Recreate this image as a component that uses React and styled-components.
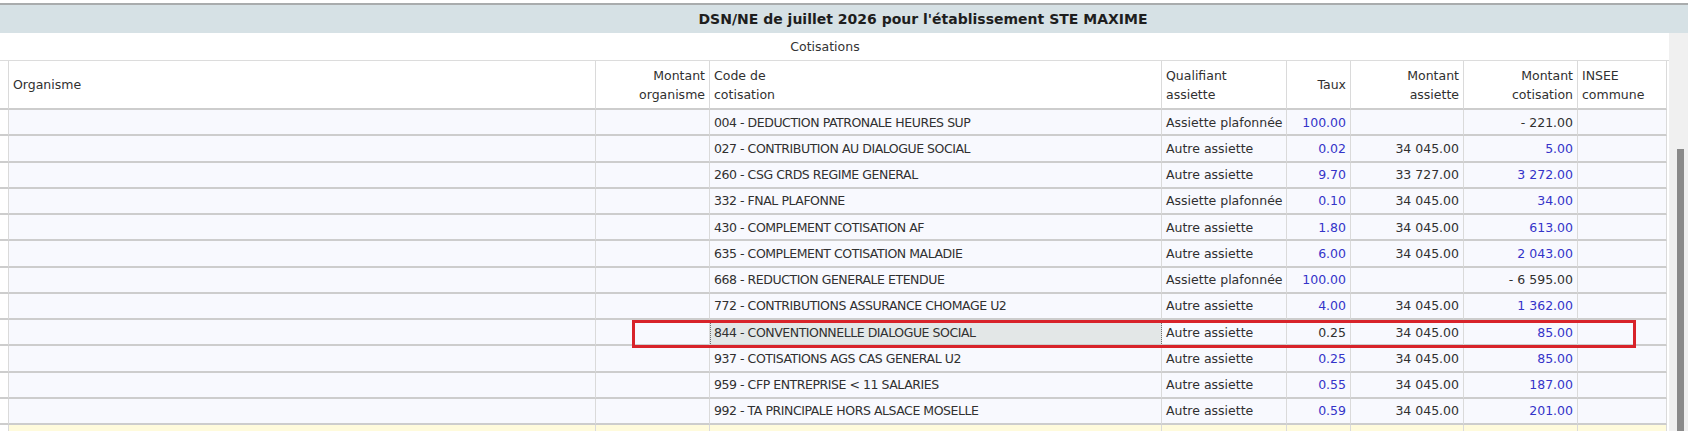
import React from "react";
import styled, { createGlobalStyle, css } from "styled-components";

const COLS = "9px 587px 114px 452px 125px 64px 113px 114px 89px";

const GlobalStyle = createGlobalStyle`
  html, body {
    margin: 0;
    padding: 0;
    background: #ffffff;
  }
  body {
    font-family: "DejaVu Sans", Verdana, sans-serif;
    font-size: 12.5px;
    color: #333333;
  }
`;

const Page = styled.div`
  width: 1688px;
  height: 431px;
  overflow: hidden;
  display: flex;
  flex-direction: column;
  padding-top: 3px;
  box-sizing: border-box;
`;

const TopRule = styled.div`
  height: 2px;
  background: #a9acad;
`;

const TitleBar = styled.div`
  height: 28px;
  background: #d6e1e5;
  display: flex;
  align-items: center;
  justify-content: center;
  padding-left: 158px;
  font-size: 14px;
  font-weight: bold;
  color: #1e1e1e;
`;

const Body = styled.div`
  flex: 1;
  min-height: 0;
  display: flex;
`;

const TableArea = styled.div`
  width: 1669px;
  background: #ffffff;
  overflow: hidden;
`;

const Caption = styled.div`
  height: 28px;
  box-sizing: border-box;
  border-bottom: 1px solid #dcdcdc;
  display: flex;
  align-items: center;
  justify-content: center;
  padding-right: 19px;
  color: #333333;
`;

const Row = styled.div`
  position: relative;
  display: grid;
  grid-template-columns: ${COLS};
  height: ${({ $h }) => $h};
`;

const tones = {
  edge: css`
    background: #ffffff;
  `,
  head: css`
    background: #ffffff;
  `,
  data: css`
    background: #f8f9fe;
  `,
  focus: css`
    background: #e3e7e7;
    outline: 1px dotted #6f6f6f;
    outline-offset: -1px;
  `,
  pending: css`
    background: #fffbdc;
  `,
};

const Cell = styled.div`
  box-sizing: border-box;
  display: flex;
  align-items: center;
  justify-content: ${({ $align }) => ($align === "right" ? "flex-end" : "flex-start")};
  padding: 0 ${({ $align }) => ($align === "right" ? "4px" : "0")} 0
    ${({ $align }) => ($align === "right" ? "0" : "4px")};
  border-right: 1px solid #dadada;
  border-bottom: 2px solid #cdcdcd;
  white-space: pre-line;
  line-height: 19px;
  text-align: ${({ $align }) => ($align === "right" ? "right" : "left")};
  color: ${({ $blue }) => ($blue ? "#3434c9" : "#303030")};
  letter-spacing: ${({ $tight }) => ($tight ? "-0.45px" : "normal")};
  overflow: hidden;
  ${({ $tone }) => tones[$tone || "data"]}
`;

const Marker = styled.div`
  position: absolute;
  left: 632px;
  top: 0;
  width: 1004px;
  height: 28px;
  box-sizing: border-box;
  border: 3.5px solid #d8232a;
  pointer-events: none;
  z-index: 2;
`;

const Gutter = styled.div`
  flex: 1;
  background: #f0f0f0;
  padding-top: 116px;
  padding-left: 8px;
`;

const Thumb = styled.div`
  width: 7px;
  height: 100%;
  background: #8a8a8a;
`;

const headers = [
  { text: "", align: "left" },
  { text: "Organisme", align: "left" },
  { text: "Montant\norganisme", align: "right" },
  { text: "Code de\ncotisation", align: "left" },
  { text: "Qualifiant\nassiette", align: "left" },
  { text: "Taux", align: "right" },
  { text: "Montant\nassiette", align: "right" },
  { text: "Montant\ncotisation", align: "right" },
  { text: "INSEE\ncommune", align: "left" },
];

const rows = [
  { code: "004 - DEDUCTION PATRONALE HEURES SUP", qual: "Assiette plafonnée", taux: "100.00", base: "", amount: "- 221.00", amountBlue: false },
  { code: "027 - CONTRIBUTION AU DIALOGUE SOCIAL", qual: "Autre assiette", taux: "0.02", base: "34 045.00", amount: "5.00" },
  { code: "260 - CSG CRDS REGIME GENERAL", qual: "Autre assiette", taux: "9.70", base: "33 727.00", amount: "3 272.00" },
  { code: "332 - FNAL PLAFONNE", qual: "Assiette plafonnée", taux: "0.10", base: "34 045.00", amount: "34.00" },
  { code: "430 - COMPLEMENT COTISATION AF", qual: "Autre assiette", taux: "1.80", base: "34 045.00", amount: "613.00" },
  { code: "635 - COMPLEMENT COTISATION MALADIE", qual: "Autre assiette", taux: "6.00", base: "34 045.00", amount: "2 043.00" },
  { code: "668 - REDUCTION GENERALE ETENDUE", qual: "Assiette plafonnée", taux: "100.00", base: "", amount: "- 6 595.00", amountBlue: false },
  { code: "772 - CONTRIBUTIONS ASSURANCE CHOMAGE U2", qual: "Autre assiette", taux: "4.00", base: "34 045.00", amount: "1 362.00" },
  { code: "844 - CONVENTIONNELLE DIALOGUE SOCIAL", qual: "Autre assiette", taux: "0.25", base: "34 045.00", amount: "85.00", selected: true },
  { code: "937 - COTISATIONS AGS CAS GENERAL U2", qual: "Autre assiette", taux: "0.25", base: "34 045.00", amount: "85.00" },
  { code: "959 - CFP ENTREPRISE < 11 SALARIES", qual: "Autre assiette", taux: "0.55", base: "34 045.00", amount: "187.00" },
  { code: "992 - TA PRINCIPALE HORS ALSACE MOSELLE", qual: "Autre assiette", taux: "0.59", base: "34 045.00", amount: "201.00" },
];

const DataRow = ({ row }) => (
  <Row $h="26.25px">
    <Cell $tone="edge" />
    <Cell />
    <Cell $align="right" />
    <Cell $tone={row.selected ? "focus" : "data"} $tight>
      {row.code}
    </Cell>
    <Cell>{row.qual}</Cell>
    <Cell $align="right" $blue={!row.selected}>
      {row.taux}
    </Cell>
    <Cell $align="right">{row.base}</Cell>
    <Cell $align="right" $blue={row.amountBlue !== false}>
      {row.amount}
    </Cell>
    <Cell />
    {row.selected && <Marker />}
  </Row>
);

const App = () => (
  <>
    <GlobalStyle />
    <Page>
      <TopRule />
      <TitleBar>DSN/NE de juillet 2026 pour l'établissement STE MAXIME</TitleBar>
      <Body>
        <TableArea>
          <Caption>Cotisations</Caption>
          <Row $h="49px">
            {headers.map((h, i) => (
              <Cell key={i} $tone="head" $align={h.align}>
                {h.text}
              </Cell>
            ))}
          </Row>
          {rows.map((row) => (
            <DataRow key={row.code} row={row} />
          ))}
          <Row $h="30px">
            <Cell $tone="edge" />
            {headers.slice(1).map((h, i) => (
              <Cell key={i} $tone="pending" />
            ))}
          </Row>
        </TableArea>
        <Gutter>
          <Thumb />
        </Gutter>
      </Body>
    </Page>
  </>
);

export default App;
